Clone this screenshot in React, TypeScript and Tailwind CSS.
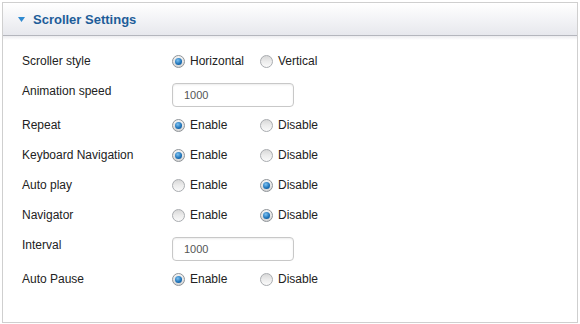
import React from "react";

type Opt = { label: string; checked?: boolean };

function Radio({ checked }: { checked?: boolean }) {
  // small bevelled radio like the old admin theme
  if (checked) {
    return (
      <span className="w-[13px] h-[13px] rounded-full border border-[#8f9498] bg-gradient-to-b from-[#f4f4f4] to-[#d6d6d6] flex items-center justify-center">
        <span className="w-[7px] h-[7px] rounded-full bg-[radial-gradient(circle_at_40%_35%,#7fc3f2,#1a6fb5_60%,#0e4f8a)]" />
      </span>
    );
  }
  return (
    <span className="w-[13px] h-[13px] rounded-full border border-[#a9acb0] bg-gradient-to-b from-[#d8d8d8] via-[#ececec] to-[#fafafa]" />
  );
}

function RadioRow({ label, opts }: { label: string; opts: Opt[] }) {
  return (
    <div className="flex items-center h-[30px]">
      <div className="w-[150px] text-[12px] text-[#222]">{label}</div>
      <div className="flex items-center">
        {opts.map((o) => (
          <label key={o.label} className="w-[88px] flex items-center gap-[5px] text-[12px] text-[#222]">
            <Radio checked={o.checked} />
            <span>{o.label}</span>
          </label>
        ))}
      </div>
    </div>
  );
}

function InputRow({ label, value }: { label: string; value: string }) {
  return (
    <div className="flex items-start h-[34px]">
      <div className="w-[150px] pt-[8px] leading-[15px] text-[12px] text-[#222]">{label}</div>
      <div className="mt-[7px] w-[122px] h-[24px] rounded-[4px] border border-[#c8c8c8] bg-white shadow-[inset_0_1px_2px_rgba(0,0,0,0.08)] pl-[11px] flex items-center text-[11px] text-[#555]">
        {value}
      </div>
    </div>
  );
}

export default function App() {
  return (
    <div className="w-[580px] h-[324px] bg-white pt-[2px] pl-[2px] font-['Liberation_Sans',Arial,sans-serif]">
      <div className="w-[576px] h-[321px] border border-[#cfcfcf] bg-white">
        {/* header */}
        <div className="h-[33px] bg-gradient-to-b from-white to-[#e7e8ed] border-b border-[#b4b6bd] flex items-center pl-[15px] pt-[1px] gap-[8px]">
          <svg width="7" height="5" viewBox="0 0 7 5">
            <path d="M0 0 L7 0 L3.5 5 Z" fill="#2f8ad0" />
          </svg>
          <span className="text-[13px] font-bold text-[#1d5d99]">Scroller Settings</span>
        </div>
        <div className="h-[4px] bg-gradient-to-b from-[#ececef] to-white" />
        {/* settings */}
        <div className="pl-[19px] pt-[6px]">
          <RadioRow label="Scroller style" opts={[{ label: "Horizontal", checked: true }, { label: "Vertical" }]} />
          <InputRow label="Animation speed" value="1000" />
          <RadioRow label="Repeat" opts={[{ label: "Enable", checked: true }, { label: "Disable" }]} />
          <RadioRow label="Keyboard Navigation" opts={[{ label: "Enable", checked: true }, { label: "Disable" }]} />
          <RadioRow label="Auto play" opts={[{ label: "Enable" }, { label: "Disable", checked: true }]} />
          <RadioRow label="Navigator" opts={[{ label: "Enable" }, { label: "Disable", checked: true }]} />
          <InputRow label="Interval" value="1000" />
          <RadioRow label="Auto Pause" opts={[{ label: "Enable", checked: true }, { label: "Disable" }]} />
        </div>
      </div>
    </div>
  );
}
